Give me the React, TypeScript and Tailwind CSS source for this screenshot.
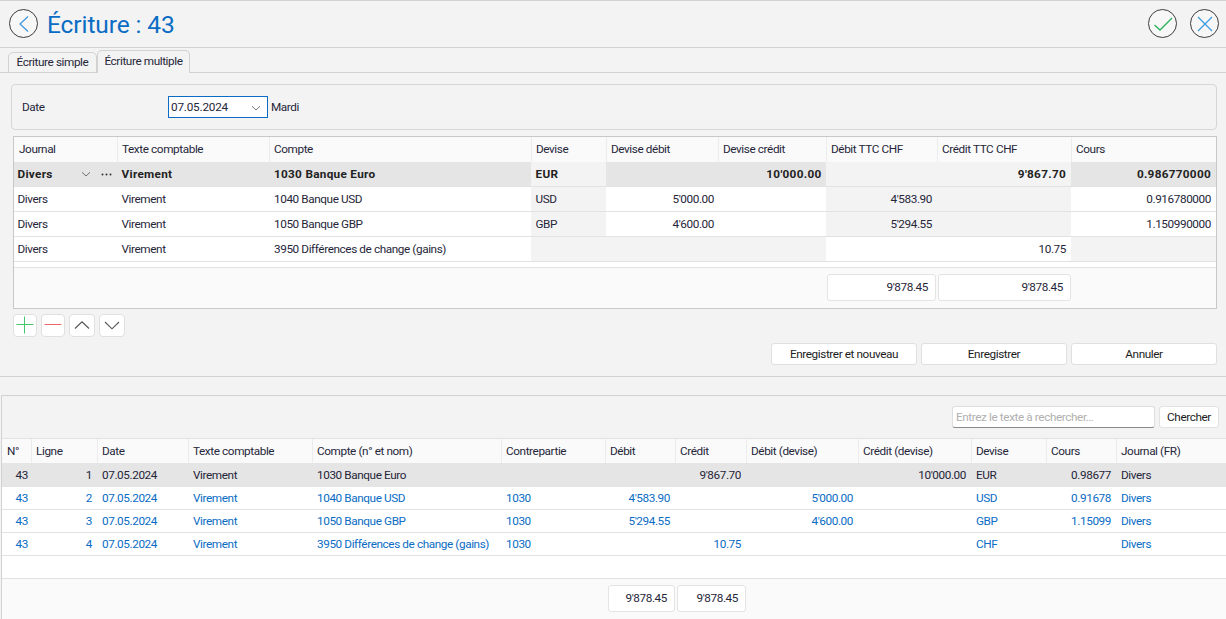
const TOP = "grid-cols-[103px_152px_262px_75px_112px_108px_111px_134px_1fr]";
const BOT = "grid-cols-[29px_66px_91px_124px_189px_104px_70px_71px_112px_113px_75px_70px_1fr]";

const font = { fontFamily: 'Roboto, "Noto Sans", sans-serif' };

function Chevron({ size = 12, className = "" }: { size?: number; className?: string }) {
  return (
    <svg width={size * 2} height={size} viewBox="0 0 24 12" className={className} fill="none" stroke="currentColor" strokeWidth="1.2">
      <path d="M4 2.5 L12 10 L20 2.5" />
    </svg>
  );
}

function Circle({ children }: { children: React.ReactNode }) {
  return (
    <div className="w-[29px] h-[29px] rounded-full border border-[#3c3c3c] flex items-center justify-center bg-[#f7f7f7]">
      {children}
    </div>
  );
}

function Head({ children }: { children?: React.ReactNode }) {
  return <div className="pl-[4px] pt-[1px] flex items-center border-l border-[#ececec] first:border-l-0 first:pl-[5px] truncate text-[#26263a]">{children}</div>;
}

function C({ v, r, bg = "", className = "" }: { v?: string; r?: boolean; bg?: string; className?: string }) {
  return (
    <div className={`flex items-center px-[5px] pt-[1px] whitespace-nowrap ${r ? "justify-end" : ""} ${bg} ${className}`}>{v}</div>
  );
}

function TopRow({ children, cls = "" }: { children: React.ReactNode; cls?: string }) {
  return <div className={`grid ${TOP} h-[25px] border-b border-[#e2e2e2] ${cls}`}>{children}</div>;
}

function Total({ v, w }: { v: string; w: string }) {
  return (
    <div className={`${w} h-[27px] bg-white border border-[#e4e4e4] rounded-[3px] flex items-center justify-end pr-[7px] pt-[1px]`}>{v}</div>
  );
}

function SmallBtn({ w, children }: { w: string; children: React.ReactNode }) {
  return (
    <div className={`${w} h-[23px] bg-white border border-[#e0e0e0] rounded-[4px] flex items-center justify-center`}>{children}</div>
  );
}

function ActionBtn({ children, w }: { children: string; w: string }) {
  return <div className={`${w} h-[22px] bg-white border border-[#e0e0e0] rounded-[3px] flex items-center justify-center pt-[1px] text-[#1c1c1c]`}>{children}</div>;
}

function BotRow({ vals, cls }: { vals: [string, string, string, string, string, string, string, string, string, string, string, string, string]; cls: string }) {
  const right = [0, 1, 6, 7, 8, 9, 11];
  return (
    <div className={`grid ${BOT} h-[23px] border-b border-[#e2e2e2] shrink-0 ${cls}`}>
      {vals.map((v, i) => (
        <C key={i} v={v} r={right.includes(i)} className={i === 0 ? "pr-[3px]" : ""} />
      ))}
    </div>
  );
}

export default function App() {
  const bold = "bg-[#e5e5e5]";
  const soft = "bg-[#f3f3f3]";
  return (
    <div style={font} className="w-[1226px] h-[619px] overflow-hidden bg-[#f3f3f3] text-[11.75px] tracking-[-0.4px] leading-none text-[#26263a] flex flex-col">
      {/* title */}
      <div className="h-[48px] border-t border-b border-[#d2d2d2] flex items-center pl-[9px] pr-[7px] pb-[1px] shrink-0">
        <Circle>
          <svg width="14" height="18" viewBox="0 0 14 18" fill="none" stroke="#3f94dc" strokeWidth="1.2"><path d="M11 1.5 L3 9 L11 16.5" /></svg>
        </Circle>
        <div className="ml-[9px] mt-[4px] text-[24.5px] tracking-[-0.1px] text-[#0a6cc4]">Écriture : 43</div>
        <div className="ml-auto flex gap-[13px]">
          <Circle>
            <svg width="20" height="16" viewBox="0 0 20 16" fill="none" stroke="#27b35c" strokeWidth="1.3"><path d="M1.5 9 L7 14 L19 2" /></svg>
          </Circle>
          <Circle>
            <svg width="18" height="18" viewBox="0 0 18 18" fill="none" stroke="#3b9be0" strokeWidth="1.3"><path d="M2 2 L16 16 M16 2 L2 16" /></svg>
          </Circle>
        </div>
      </div>
      {/* tabs */}
      <div className="h-[25px] border-b border-[#d2d2d2] flex items-end pl-[8px] shrink-0">
        <div className="w-[89px] h-[21px] -mb-px border border-[#d2d2d2] rounded-t-[5px] flex items-center justify-center pt-[1px]">Écriture simple</div>
        <div className="w-[93px] h-[23px] -mb-px border border-b-0 border-[#d2d2d2] rounded-t-[5px] bg-[#f3f3f3] flex items-center justify-center z-10">Écriture multiple</div>
      </div>
      {/* date */}
      <div className="mt-[11px] ml-[11px] mr-[9px] h-[46px] border border-[#d6d6d6] rounded-[4px] flex items-center pl-[10px] pt-[1px] shrink-0">
        <div className="w-[146px]">Date</div>
        <div className="w-[100px] h-[22px] -mt-[1px] bg-white border border-[#0a6cc4] flex items-center justify-between pl-[2px] pr-[5px] pt-[1px] tracking-[-0.2px]">
          07.05.2024
          <Chevron size={6} className="text-[#222]" />
        </div>
        <div className="ml-[3px]">Mardi</div>
      </div>
      {/* upper table */}
      <div className="mt-[6px] ml-[13px] mr-[9px] h-[173px] border border-[#c8c8c8] bg-[#fafafa] shrink-0">
        <div className={`grid ${TOP} h-[25px]`}>
          {["Journal", "Texte comptable", "Compte", "Devise", "Devise débit", "Devise crédit", "Débit TTC CHF", "Crédit TTC CHF", "Cours"].map((h) => (
            <Head key={h}>{h}</Head>
          ))}
        </div>
        <TopRow cls="font-bold text-[#222] tracking-[0.3px]">
          <div className={`flex items-center pl-[3.5px] pr-[5px] justify-between ${bold}`}>
            <span className="pt-[1px]">Divers</span>
            <span className="flex items-center gap-[9px]">
              <Chevron size={6} className="text-[#222]" />
              <svg width="11" height="3" viewBox="0 0 11 3" fill="#333"><circle cx="1.5" cy="1.5" r="1" /><circle cx="5.5" cy="1.5" r="1" /><circle cx="9.5" cy="1.5" r="1" /></svg>
            </span>
          </div>
          <C v="Virement" bg={bold} className="pl-[4.5px]" />
          <C v="1030 Banque Euro" bg={bold} />
          <C v="EUR" bg={soft} className="pl-[4.5px]" />
          <C bg={bold} />
          <C v="10'000.00" r bg={bold} className="pr-[4.5px]" />
          <C bg={soft} />
          <C v="9'867.70" r bg={soft} />
          <C v="0.986770000" r bg={bold} />
        </TopRow>
        <TopRow cls="bg-white">
          <C v="Divers" className="pl-[3.5px]" /><C v="Virement" className="pl-[4.5px]" /><C v="1040 Banque USD" /><C v="USD" bg={soft} className="pl-[4.5px]" />
          <C v="5'000.00" r className="pr-[4px]" /><C /><C v="4'583.90" r bg={soft} /><C bg={soft} /><C v="0.916780000" r />
        </TopRow>
        <TopRow cls="bg-white">
          <C v="Divers" className="pl-[3.5px]" /><C v="Virement" className="pl-[4.5px]" /><C v="1050 Banque GBP" /><C v="GBP" bg={soft} className="pl-[4.5px]" />
          <C v="4'600.00" r className="pr-[4px]" /><C /><C v="5'294.55" r bg={soft} /><C bg={soft} /><C v="1.150990000" r />
        </TopRow>
        <TopRow cls="bg-white">
          <C v="Divers" className="pl-[3.5px]" /><C v="Virement" className="pl-[4.5px]" /><C v="3950 Différences de change (gains)" />
          <C bg={soft} /><C bg={soft} /><C bg={soft} /><C /><C v="10.75" r /><C bg={soft} />
        </TopRow>
        <div className="h-[6px] bg-white border-b border-[#e2e2e2]" />
        <div className="pl-[813px] pt-[6px] flex gap-[2px]">
          <Total w="w-[109px]" v="9'878.45" />
          <Total w="w-[133px]" v="9'878.45" />
        </div>
      </div>
      {/* small buttons */}
      <div className="mt-[5px] ml-[13px] flex gap-[4px] shrink-0">
        <SmallBtn w="w-[24px]">
          <svg width="18" height="19" viewBox="0 0 18 19" stroke="#42c770" strokeWidth="1"><path d="M8.5 0.5 V17.5 M0.5 8.5 H17.5" /></svg>
        </SmallBtn>
        <SmallBtn w="w-[24px]">
          <svg width="18" height="3" viewBox="0 0 18 3" stroke="#ee6666" strokeWidth="1"><path d="M0.5 0.5 H17.5" /></svg>
        </SmallBtn>
        <SmallBtn w="w-[26px]">
          <svg width="16" height="9" viewBox="0 0 16 9" fill="none" stroke="#555" strokeWidth="1.1"><path d="M1 7.5 L8 0.8 L15 7.5" /></svg>
        </SmallBtn>
        <SmallBtn w="w-[26px]">
          <svg width="16" height="9" viewBox="0 0 16 9" fill="none" stroke="#555" strokeWidth="1.1"><path d="M1 1 L8 7.8 L15 1" /></svg>
        </SmallBtn>
      </div>
      {/* actions */}
      <div className="mt-[6px] pr-[9px] flex justify-end gap-[4px] shrink-0">
        <ActionBtn w="w-[146px]">Enregistrer et nouveau</ActionBtn>
        <ActionBtn w="w-[146px]">Enregistrer</ActionBtn>
        <ActionBtn w="w-[146px]">Annuler</ActionBtn>
      </div>
      <div className="mt-[11px] h-px bg-[#d2d2d2] shrink-0" />
      {/* lower panel */}
      <div className="mt-[18px] ml-[1px] flex-1 border-t border-l border-[#d2d2d2] flex flex-col min-h-0">
        <div className="h-[42px] flex items-center justify-end pr-[7px] gap-[4px] shrink-0">
          <div className="w-[203px] h-[22px] bg-white border border-[#dedede] border-b-[#8a8a8a] rounded-[3px] flex items-center pl-[3px] pt-[1px] text-[#b0b0b0]">Entrez le texte à rechercher…</div>
          <div className="w-[60px] h-[22px] bg-white border border-[#e2e2e2] rounded-[3px] flex items-center justify-center pt-[1px] text-[#1c1c1c]">Chercher</div>
        </div>
        <div className="flex-1 bg-[#fafafa] border-t border-[#e2e2e2] flex flex-col min-h-0">
          <div className={`grid ${BOT} h-[24px] shrink-0`}>
            {["N°", "Ligne", "Date", "Texte comptable", "Compte (n° et nom)", "Contrepartie", "Débit", "Crédit", "Débit (devise)", "Crédit (devise)", "Devise", "Cours", "Journal (FR)"].map((h) => (
              <Head key={h}>{h}</Head>
            ))}
          </div>
          <BotRow cls="h-[24px] bg-[#e5e5e5] border-b-0 text-[#26263a]" vals={["43", "1", "07.05.2024", "Virement", "1030 Banque Euro", "", "", "9'867.70", "", "10'000.00", "EUR", "0.98677", "Divers"]} />
          <BotRow cls="bg-white text-[#0a6cc4]" vals={["43", "2", "07.05.2024", "Virement", "1040 Banque USD", "1030", "4'583.90", "", "5'000.00", "", "USD", "0.91678", "Divers"]} />
          <BotRow cls="bg-white text-[#0a6cc4]" vals={["43", "3", "07.05.2024", "Virement", "1050 Banque GBP", "1030", "5'294.55", "", "4'600.00", "", "GBP", "1.15099", "Divers"]} />
          <BotRow cls="bg-white text-[#0a6cc4]" vals={["43", "4", "07.05.2024", "Virement", "3950 Différences de change (gains)", "1030", "", "10.75", "", "", "CHF", "", "Divers"]} />
          <div className="h-[23px] bg-white border-b border-[#e2e2e2] shrink-0" />
          <div className="pl-[606px] pt-[6px] flex gap-[2px]">
            <Total w="w-[67px]" v="9'878.45" />
            <Total w="w-[69px]" v="9'878.45" />
          </div>
        </div>
      </div>
    </div>
  );
}
